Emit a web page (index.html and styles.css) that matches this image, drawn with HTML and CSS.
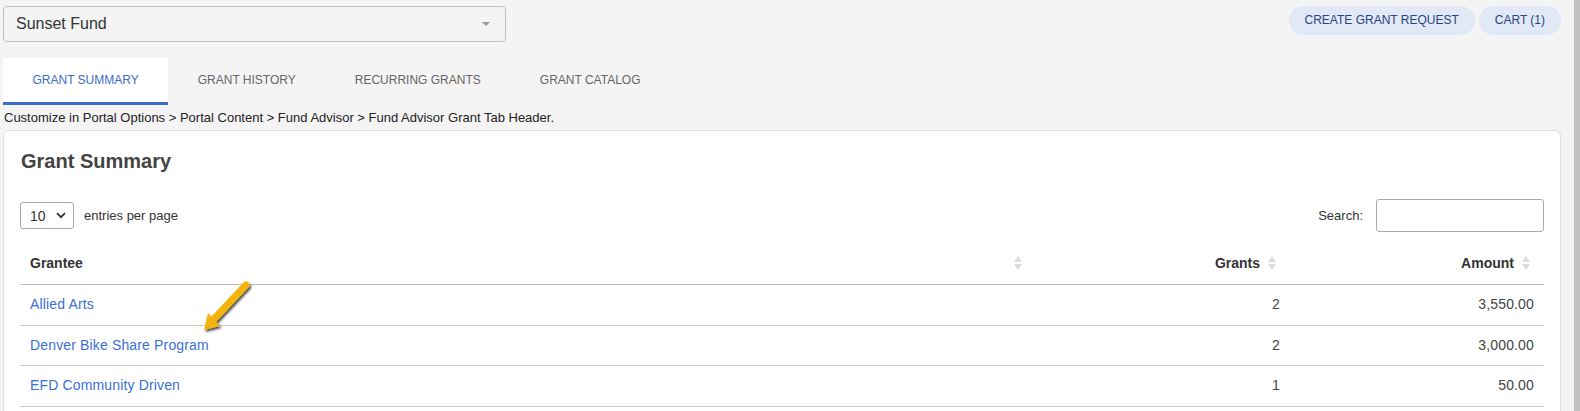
FILE: index.html
```html
<!DOCTYPE html>
<html lang="en">
<head>
<meta charset="utf-8">
<title>Grant Summary</title>
<link rel="stylesheet" href="styles.css">
</head>
<body>
<div class="page">
  <div class="main">
    <div class="topbar">
      <div class="fund-select">
        <span class="fund-name">Sunset Fund</span>
        <span class="caret"></span>
      </div>
      <div class="actions">
        <button class="pill">CREATE GRANT REQUEST</button>
        <button class="pill">CART (1)</button>
      </div>
    </div>

    <nav class="tabs">
      <div class="tab active">GRANT SUMMARY</div>
      <div class="tab">GRANT HISTORY</div>
      <div class="tab">RECURRING GRANTS</div>
      <div class="tab">GRANT CATALOG</div>
    </nav>

    <div class="crumb">Customize in Portal Options &gt; Portal Content &gt; Fund Advisor &gt; Fund Advisor Grant Tab Header.</div>

    <section class="card">
      <h2 class="card-title">Grant Summary</h2>
      <div class="controls">
        <div class="length">
          <div class="len-select">
            <span>10</span>
            <svg class="chev" width="10" height="7" viewBox="0 0 10 7"><path d="M1 1.2 L5 5.2 L9 1.2" fill="none" stroke="#333" stroke-width="1.8"/></svg>
          </div>
          <span class="len-label">entries per page</span>
        </div>
        <div class="search">
          <span class="search-label">Search:</span>
          <div class="search-input"></div>
        </div>
      </div>

      <table class="grid">
        <colgroup>
          <col class="c-grantee">
          <col class="c-grants">
          <col class="c-amount">
        </colgroup>
        <thead>
          <tr>
            <th class="left">Grantee<span class="sort"><i class="up"></i><i class="down"></i></span></th>
            <th class="right">Grants<span class="sort"><i class="up"></i><i class="down"></i></span></th>
            <th class="right">Amount<span class="sort"><i class="up"></i><i class="down"></i></span></th>
          </tr>
        </thead>
        <tbody>
          <tr><td><a class="link">Allied Arts</a></td><td class="right">2</td><td class="right">3,550.00</td></tr>
          <tr><td><a class="link">Denver Bike Share Program</a></td><td class="right">2</td><td class="right">3,000.00</td></tr>
          <tr><td><a class="link">EFD Community Driven</a></td><td class="right">1</td><td class="right">50.00</td></tr>
        </tbody>
      </table>
    </section>
  </div>
  <div class="scrollbar"></div>
</div>

<svg class="pointer" width="80" height="80" viewBox="190 270 80 80">
  <defs>
    <filter id="sh" x="-30%" y="-30%" width="160%" height="160%">
      <feDropShadow dx="1.5" dy="2" stdDeviation="1.2" flood-color="#000" flood-opacity="0.7"/>
    </filter>
  </defs>
  <g filter="url(#sh)">
    <line x1="246" y1="285" x2="214" y2="319" stroke="#f5b30b" stroke-width="7" stroke-linecap="round"/>
    <polygon points="204,330 220,326 208,313" fill="#f5b30b"/>
  </g>
</svg>
</body>
</html>
```

FILE: styles.css
```css
* { box-sizing: border-box; }

html, body {
  margin: 0;
  height: 100%;
  overflow: hidden;
}

body {
  background: #f4f4f4;
  font-family: "Liberation Sans", Arial, sans-serif;
  color: #333;
}

.page {
  display: flex;
  height: 411px;
}

.main {
  flex: 1;
  padding: 6px 0 0 3px;
  min-width: 0;
}

.scrollbar {
  width: 6px;
  margin-left: 13px;
  background: #c2c2c2;
}

/* top bar */
.topbar {
  display: flex;
  justify-content: space-between;
  align-items: flex-start;
}

.fund-select {
  width: 503px;
  height: 36px;
  border: 1px solid #bdbdbd;
  border-radius: 4px;
  display: flex;
  align-items: center;
  justify-content: space-between;
  padding: 0 15px 0 12px;
}

.fund-name {
  font-size: 16px;
  color: #333;
}

.caret {
  width: 0;
  height: 0;
  border-left: 4px solid transparent;
  border-right: 4px solid transparent;
  border-top: 4px solid #999;
}

.actions {
  display: flex;
  gap: 4px;
}

.pill {
  height: 29px;
  padding: 0 16px;
  border: none;
  border-radius: 15px;
  background: #e1e9f7;
  color: #27457f;
  font-family: "Liberation Sans", Arial, sans-serif;
  font-size: 12px;
  line-height: 29px;
}

/* tabs */
.tabs {
  display: flex;
  margin-top: 16px;
}

.tab {
  height: 47px;
  padding: 0 29.5px;
  font-size: 12px;
  line-height: 44px;
  color: #666;
  border-bottom: 3px solid transparent;
}

.tab.active {
  background: #fff;
  color: #3a6cc9;
  border-bottom-color: #3a6cc9;
}

.crumb {
  height: 25px;
  line-height: 25px;
  font-size: 13px;
  color: #222;
  padding-left: 1px;
}

/* card */
.card {
  background: #fff;
  border: 1px solid #dedede;
  border-radius: 6px;
  padding: 18px 16px 0 16px;
  height: 300px;
}

.card-title {
  margin: 0;
  font-size: 20px;
  line-height: 24px;
  font-weight: bold;
  color: #444;
  padding-left: 1px;
}

.controls {
  margin-top: 26px;
  display: flex;
  justify-content: space-between;
  align-items: center;
}

.length {
  display: flex;
  align-items: center;
  gap: 10px;
}

.len-select {
  width: 54px;
  height: 27px;
  border: 1px solid #aaa;
  border-radius: 3px;
  display: flex;
  align-items: center;
  justify-content: space-between;
  padding: 0 7px 0 9px;
  font-size: 14px;
  color: #333;
}

.len-label,
.search-label {
  font-size: 13px;
  color: #333;
}

.search {
  display: flex;
  align-items: center;
  gap: 13px;
}

.search-input {
  width: 168px;
  height: 33px;
  border: 1px solid #aaa;
  border-radius: 3px;
}

/* table */
.grid {
  width: 100%;
  margin-top: 10px;
  border-collapse: collapse;
  table-layout: fixed;
  font-size: 14px;
}

.c-grantee { width: 1016px; }
.c-grants { width: 254px; }
.c-amount { width: 254px; }

.grid th {
  position: relative;
  padding: 12px 30px 12px 10px;
  line-height: 18px;
  font-weight: bold;
  color: #333;
  border-bottom: 1px solid #bdbdbd;
}

.grid td {
  padding: 10px 10px 10px 10px;
  line-height: 19.5px;
  color: #444;
  letter-spacing: 0.15px;
  border-bottom: 1px solid #c8c8c8;
}

.left { text-align: left; }
.right { text-align: right; }

.sort {
  position: absolute;
  right: 14px;
  top: 50%;
  transform: translateY(-50%);
  display: flex;
  flex-direction: column;
  gap: 2px;
}

.sort i {
  display: block;
  width: 0;
  height: 0;
  border-left: 4px solid transparent;
  border-right: 4px solid transparent;
}

.sort .up { border-bottom: 6px solid #dcdcdc; }
.sort .down { border-top: 6px solid #dcdcdc; }

.link {
  color: #3a70d6;
  text-decoration: none;
}

.pointer {
  position: absolute;
  left: 190px;
  top: 270px;
  overflow: visible;
}
```
